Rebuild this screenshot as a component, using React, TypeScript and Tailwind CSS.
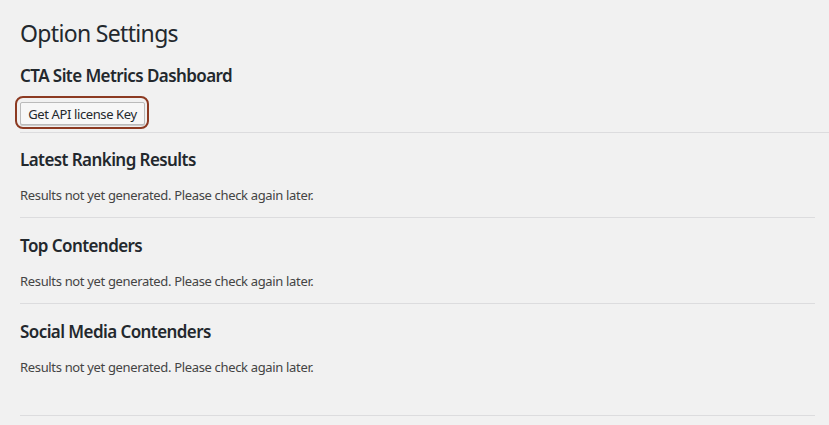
const font = { fontFamily: '"Noto Sans", "Open Sans", sans-serif' };

function Section({ title, last }: { title: string; last?: boolean }) {
  return (
    <div>
      <h2 className="mt-[16px] text-[17px] font-semibold leading-[24px] tracking-[-0.034em] text-[#23282d]">{title}</h2>
      <p className="mt-[13px] text-[13px] leading-[20px] tracking-[-0.026em] text-[#444]">
        Results not yet generated. Please check again later.
      </p>
      <hr className={`${last ? "mt-[38px]" : "mt-[12px]"} border-0 border-t border-[#dcdcde]`} />
    </div>
  );
}

export default function App() {
  return (
    <div className="h-[425px] w-full overflow-hidden bg-[#f1f1f1] pl-[20px] pr-[14px]" style={font}>
      <h1 className="pt-[19px] text-[23px] font-normal leading-[29px] tracking-[-0.029em] text-[#23282d]">
        Option Settings
      </h1>
      <h2 className="mt-[16px] text-[17px] font-semibold leading-[24px] tracking-[-0.034em] text-[#23282d]">
        CTA Site Metrics Dashboard
      </h2>
      <div className="mt-[8px] -ml-[5px] w-fit rounded-[8px] border-2 border-[#8c3a22] pb-[2px] pl-[3px] pr-[2px] pt-[4px]">
        <button className="block h-[23px] w-[125px] whitespace-nowrap rounded-[2px] border border-[#bbb] bg-[#f7f7f7] px-0 text-[13px] leading-[20px] tracking-[-0.03em] text-[#23282d] shadow-[0_1px_0_#ccc]">
          Get API license Key
        </button>
      </div>
      <hr className="mt-[3px] -mr-[14px] border-0 border-t border-[#dcdcde]" />
      <div className="-mt-[1px]">
        <Section title="Latest Ranking Results" />
        <Section title="Top Contenders" />
        <Section title="Social Media Contenders" last />
      </div>
    </div>
  );
}
